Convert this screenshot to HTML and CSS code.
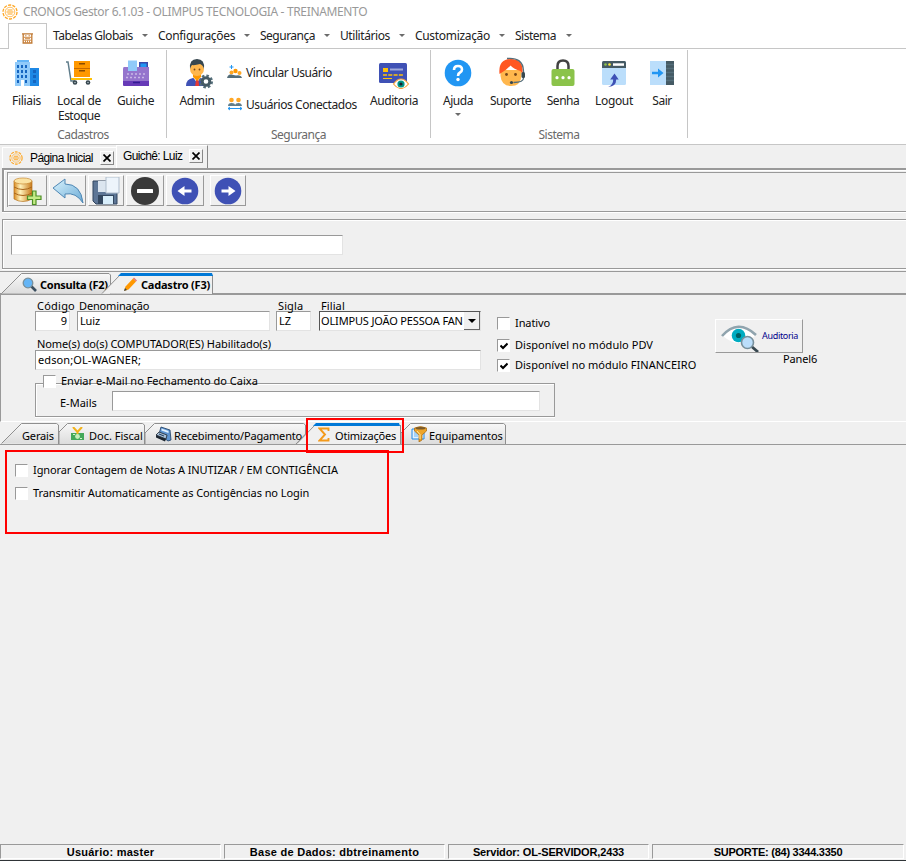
FILE: index.html
```html
<!DOCTYPE html>
<html lang="pt-BR">
<head>
<meta charset="utf-8">
<title>CRONOS Gestor</title>
<link rel="stylesheet" href="styles.css">
</head>
<body>
<svg class="defs" width="0" height="0">
  <defs>
    <linearGradient id="tabGrad" x1="0" y1="0" x2="0" y2="1"><stop offset="0" stop-color="#f8f8f8"/><stop offset="1" stop-color="#dcdcdc"/></linearGradient>
    <linearGradient id="gold" x1="0" y1="0" x2="1" y2="0"><stop offset="0" stop-color="#d98a20"/><stop offset=".35" stop-color="#fff3bd"/><stop offset="1" stop-color="#c87a1c"/></linearGradient>
    <linearGradient id="sky" x1="0" y1="0" x2="1" y2="1"><stop offset="0" stop-color="#d9f3fd"/><stop offset="1" stop-color="#6aaad6"/></linearGradient>
    <symbol id="coin" viewBox="0 0 16 16"><circle cx="8" cy="8" r="7" fill="none" stroke="#ffa51f" stroke-width="1.3" stroke-dasharray="3.2 1.200"/><circle cx="8" cy="8" r="4.800" fill="none" stroke="#ffb84d" stroke-width=".9"/><path d="M5.500 6h5M4.500 8h7M5.500 10h5" stroke="#ffa51f" stroke-width="1.100"/></symbol>
  </defs>
</svg>
<div class="window">
  <header class="titlebar"><svg width="16" height="16"><use href="#coin"/></svg><span class="t k35">CRONOS Gestor 6.1.03 - OLIMPUS TECNOLOGIA - TREINAMENTO</span></header>
  <nav class="menubar">
    <div class="home-tab"><svg width="11" height="11" viewBox="0 0 11 11"><path d="M0 .8h11M.5 10h10M1.200 1v9M9.800 1v9" stroke="#c07a34" stroke-width="1.300"/><path d="M3 2.800h1.500M6.500 2.800H8M3 5.700h5M1 4.300h9M1 7.200h9M3.500 7.500V10M5.500 7.500V10M7.500 7.500V10" stroke="#cf8a45"/></svg></div>
    <div class="menu m1"><span class="t k49">Tabelas Globais</span><i></i></div>
    <div class="menu m2"><span class="t k33">Configurações</span><i></i></div>
    <div class="menu m3"><span class="t k49">Segurança</span><i></i></div>
    <div class="menu m4"><span class="t k43">Utilitários</span><i></i></div>
    <div class="menu m5"><span class="t k33">Customização</span><i></i></div>
    <div class="menu m6"><span class="t k49">Sistema</span><i></i></div>
  </nav>
  <section class="ribbon">
    <div class="group g1">
      <div class="items">
        <div class="big"><svg width="32" height="32" viewBox="0 0 32 32"><path d="M6 3h12v2H6z" fill="#64b5f6"/><path d="M4 5h15v24H4z" fill="#90caf9"/><path d="M19 11h9v18h-9z" fill="#1e88e5"/><path d="M6 8h2v3H6zM10 8h2v3h-2zM14 8h2v3h-2zM6 13h2v3H6zM10 13h2v3h-2zM14 13h2v3h-2zM6 18h2v3H6zM10 18h2v3h-2zM14 18h2v3h-2zM6 23h2v3H6zM14 23h2v3h-2zM22 13h3v3h-3zM22 18h3v3h-3zM22 23h3v3h-3z" fill="#1565c0"/><path d="M10 23h3v6h-3z" fill="#fff"/></svg><span class="t k33">Filiais</span></div>
        <div class="big"><svg width="32" height="32" viewBox="0 0 32 32"><path d="M3 5h2l3 19h4" fill="none" stroke="#607d8b" stroke-width="1.500"/><path d="M11 4h16v16H11z" fill="#ff9800"/><path d="M11 11.500h16" stroke="#c66900"/><path d="M16 6h6v1.500h-6zM16 13h6v1.500h-6z" fill="#8a4b00"/><path d="M8 21h21v2H8z" fill="#ffc107"/><circle cx="12" cy="25.500" r="2.300" fill="#37474f"/><circle cx="25" cy="25.500" r="2.300" fill="#37474f"/><circle cx="12" cy="25.500" r=".8" fill="#b0bec5"/><circle cx="25" cy="25.500" r=".8" fill="#b0bec5"/></svg><div class="two"><span class="t k33">Local de</span><span class="t k49">Estoque</span></div></div>
        <div class="big"><svg width="32" height="32" viewBox="0 0 32 32"><path d="M19 5h9v7h-9z" fill="#3949ab"/><path d="M20.500 6.500h6V10h-6z" fill="#2196f3"/><path d="M4 10h25v15H3V12q0-2 1-2z" fill="#9575cd"/><path d="M8 3.500h9V14H8z" fill="#90caf9"/><path d="M3 24h26v5H4q-1 0-1-1z" fill="#673ab7"/><path d="M7 17h19M6 20.500h20" stroke="#c9b9e6" stroke-width="1.600" stroke-dasharray="2 2"/><path d="M13 25.500h7" stroke="#311b92" stroke-width="1.500"/></svg><span class="t k35">Guiche</span></div>
      </div>
      <div class="caption"><span class="t k49">Cadastros</span></div>
    </div>
    <div class="group g2">
      <div class="items">
        <div class="big"><svg width="32" height="32" viewBox="0 0 32 32"><path d="M5 29q0-7 7-8l4 1 4-1q4 1 5 8z" fill="#3f51b5"/><path d="M12 20h8l-4 6z" fill="#fff"/><path d="M15.200 21h2l1 8h-4z" fill="#e53935"/><path d="M12 16h8v4l-4 4-4-4z" fill="#ff9800"/><circle cx="16" cy="12" r="7" fill="#ffb74d"/><path d="M9 12q-1-10 7-10t7 10q-1-4-4-5-5 1.500-8 1-1 1-2 4z" fill="#37474f"/><circle cx="13.500" cy="12.500" r=".9" fill="#784719"/><circle cx="18.500" cy="12.500" r=".9" fill="#784719"/><circle cx="25" cy="24.500" r="5.800" fill="none" stroke="#546e7a" stroke-width="2.500" stroke-dasharray="2.500 2"/><circle cx="25" cy="24.500" r="3.800" fill="#fff" stroke="#455a64" stroke-width="3"/></svg><span class="t k35">Admin</span></div>
        <div class="small-col">
          <div class="small"><svg width="16" height="16" viewBox="0 0 16 16"><path d="M4.500 1v4M2.500 3h4" stroke="#2196f3"/><circle cx="4.500" cy="8.500" r="2" fill="#ffa726"/><circle cx="8.500" cy="7" r="2.200" fill="#ff9800"/><circle cx="12.500" cy="9" r="2" fill="#ffa726"/><path d="M0 14q1-4 4-3.500l5 1q5-1 6 2.500z" fill="#546e7a"/></svg><span class="t k43">Vincular Usuário</span></div>
          <div class="small"><svg width="16" height="16" viewBox="0 0 16 16"><circle cx="4.500" cy="4" r="2.300" fill="#ffa726"/><circle cx="11.500" cy="4" r="2.300" fill="#ffa726"/><path d="M1 10q0-3 3.500-3T8 9q.5-2 3.500-2T15 10z" fill="#607d8b"/><path d="M1 12.500h14M3 11l-2 1.500L3 14M13 11l2 1.500L13 14" fill="none" stroke="#2196f3"/></svg><span class="t k43">Usuários Conectados</span></div>
        </div>
        <div class="big"><svg width="32" height="32" viewBox="0 0 32 32"><rect x="1" y="6" width="28" height="20" rx="1.500" fill="#3f51b5"/><path d="M5 11h5v4H5z" fill="#ffc107"/><path d="M12 11.500h13v2H12z" fill="#9fa8da"/><path d="M5 18h20" stroke="#ffc107" stroke-width="1.600" stroke-dasharray="4 1.300"/><path d="M5 21.500h9" stroke="#ffc107"/><path d="M15.500 27q3.500-5 7.500-5t7.500 5q-3.500 4.500-7.500 4.500T15.500 27z" fill="#fff" stroke="#f5a33c" stroke-width="1.200"/><circle cx="23" cy="27" r="3.600" fill="#009688"/><circle cx="23" cy="27" r="1.600" fill="#17202a"/></svg><span class="t k43">Auditoria</span></div>
      </div>
      <div class="caption"><span class="t k49">Segurança</span></div>
    </div>
    <div class="group g3">
      <div class="items">
        <div class="big"><svg width="32" height="32" viewBox="0 0 32 32"><circle cx="16" cy="16" r="13.300" fill="#2196f3"/><path d="M12 13q0-4 4-4t4 3.500q0 2-2 3t-2 3.500" fill="none" stroke="#fff" stroke-width="2.600"/><circle cx="16" cy="22.500" r="1.700" fill="#fff"/></svg><span class="t k43">Ajuda</span><i></i></div>
        <div class="big"><svg width="32" height="32" viewBox="0 0 32 32"><path d="M5.500 13h21v6q-1 10-10.500 10T5.500 19z" fill="#ffb74d"/><path d="M4.500 17Q3 2 16 2t11.500 15l-2-3Q19 12 15.500 8.500 12 13 4.500 17z" fill="#ff5722"/><path d="M12 1.500Q28 0 28.500 14v7q0 4.500-10 4.500" fill="none" stroke="#546e7a" stroke-width="1.300"/><rect x="26.500" y="15" width="3.500" height="6" rx="1.500" fill="#37474f"/><circle cx="11.500" cy="17.500" r="1.400" fill="#784719"/><circle cx="20.500" cy="17.500" r="1.400" fill="#784719"/><circle cx="16.500" cy="25.500" r="1.600" fill="#37474f"/></svg><span class="t k49">Suporte</span></div>
        <div class="big"><svg width="32" height="32" viewBox="0 0 32 32"><path d="M10.500 15V9q0-5.500 5.500-5.500T21.500 9v6" fill="none" stroke="#424242" stroke-width="2.500"/><rect x="4.500" y="12" width="23" height="17" rx="2" fill="#8bc34a"/><circle cx="10" cy="20.700" r="1.600" fill="#fff"/><circle cx="16" cy="20.700" r="1.600" fill="#fff"/><circle cx="22" cy="20.700" r="1.600" fill="#fff"/></svg><span class="t k49">Senha</span></div>
        <div class="big"><svg width="32" height="32" viewBox="0 0 32 32"><rect x="4" y="4" width="24" height="24" rx="1.500" fill="#bbdefb"/><path d="M5.500 4h21Q28 4 28 5.500V11H4V5.500Q4 4 5.500 4z" fill="#455a64"/><circle cx="7.500" cy="7.500" r="1.300" fill="#8bc34a"/><circle cx="11.500" cy="7.500" r="1.300" fill="#ffeb3b"/><path d="M15 6.300h11v2.500H15z" fill="#fff"/><path d="M16.500 16.500l4.200 6h-2.500q0 7-8 7.500 5-2 5-7.500h-3z" fill="#3f51b5"/></svg><span class="t k35">Logout</span></div>
        <div class="big"><svg width="32" height="32" viewBox="0 0 32 32"><path d="M4 4h16v24H4z" fill="#bbdefb"/><path d="M20 4h8v24h-8z" fill="#455a64"/><path d="M20 7.500h8M20 11.500h8M20 15.500h8M20 19.500h8M20 23.500h8" stroke="#546e7a" stroke-width="1.500"/><path d="M6 14.700h6v-3.200l5.500 4.500-5.500 4.500v-3.200H6z" fill="#2196f3"/></svg><span class="t k49">Sair</span></div>
      </div>
      <div class="caption"><span class="t k49">Sistema</span></div>
    </div>
  </section>
  <div class="doctabs">
    <div class="doctab first"><svg width="14" height="14"><use href="#coin"/></svg><span class="t k60">Página Inicial</span><button><svg width="8" height="8" viewBox="0 0 8 8"><path d="M.5.500l7 7M7.500.500l-7 7" stroke="#000" stroke-width="1.700"/></svg></button></div>
    <div class="doctab second"><span class="t k60">Guichê: Luiz</span><button><svg width="8" height="8" viewBox="0 0 8 8"><path d="M.5.500l7 7M7.500.500l-7 7" stroke="#000" stroke-width="1.700"/></svg></button></div>
  </div>
  <div class="toolpanel"><div class="toolbar">
    <div class="tool w1"><svg width="30" height="28" viewBox="0 0 30 28"><path d="M1 4v18q9 5 18 0V4z" fill="url(#gold)" stroke="#b8741e" stroke-width=".7"/><ellipse cx="10" cy="4" rx="9" ry="3" fill="#fbe3a3" stroke="#c98a35" stroke-width=".7"/><path d="M1 10q9 5 18 0M1 16q9 5 18 0" fill="none" stroke="#a9651a"/><path d="M19.500 14h3.500v5h5v3.500h-5v5h-3.500v-5h-5V19h5z" fill="#c3ea85" stroke="#4e8f26" stroke-width="1.200"/></svg></div>
    <div class="tool w2"><svg width="32" height="28" viewBox="0 0 32 28"><path d="M1 11L13 2v5q16 0 18 19-7-11-18-9v4z" fill="url(#sky)" stroke="#4f87b4"/></svg></div>
    <div class="tool w3"><svg width="30" height="28" viewBox="0 0 30 28"><path d="M2 4h22l2 2v21H5l-3-3z" fill="#5d7696" stroke="#31445e"/><path d="M7 4h13v11H7z" fill="#dbe5ef"/><path d="M15 0h13v16H15z" fill="#edf4fb" stroke="#afbdcc"/><path d="M7 18h16v9H7z" fill="#33475f"/><path d="M12 19h10v8H12z" fill="#d8eefb"/></svg></div>
    <div class="tool w4"><svg width="30" height="30" viewBox="0 0 30 30"><circle cx="15" cy="15" r="14" fill="#3a3a3a"/><rect x="7" y="13" width="16" height="4" rx=".6" fill="#fff"/></svg></div>
    <div class="tool w5"><svg width="28" height="28" viewBox="0 0 28 28"><circle cx="14" cy="14" r="13.300" fill="#3f51b5"/><path d="M6.500 14l7-5v3.600h7v2.800h-7V19z" fill="#fff"/></svg></div>
    <div class="tool w6"><svg width="28" height="28" viewBox="0 0 28 28"><circle cx="14" cy="14" r="13.300" fill="#3f51b5"/><path d="M21.500 14l-7-5v3.600h-7v2.800h7V19z" fill="#fff"/></svg></div>
  </div></div>
  <div class="searchpanel"><div class="field search"></div></div>
  <div class="tabstrip main-tabs">
    <div class="ptab p1"><svg width="112" height="22" viewBox="0 0 112 22"><path d="M1.500 21.500L21.500 1.500H109l1.500 1.500V22" fill="url(#tabGrad)" stroke="#8f8f8f"/></svg><div class="ptext"><svg width="15" height="15" viewBox="0 0 15 15"><path d="M9 9l5 5" stroke="#3c4f5f" stroke-width="2.600"/><circle cx="6" cy="6" r="4.800" fill="#64b5f6" stroke="#78909c" stroke-width="1.300"/></svg><span class="t k25">Consulta (F2)</span></div></div>
    <div class="ptab p2"><svg width="112" height="22" viewBox="0 0 112 22"><path d="M1 21.500L20.500 1.500H111.500V22" fill="#f0f0f0"/><path d="M1 21.500L20.500 1.500M111.500 3v19" stroke="#8f8f8f"/><path d="M20 1h91l1 3H17z" fill="#0078d7"/></svg><div class="ptext"><svg width="14" height="15" viewBox="0 0 14 15"><path d="M1 14l1.500-4.500L10 1.500l3 3-7.500 8z" fill="#ff9800"/><path d="M1 14l1-3 2 2z" fill="#37474f"/><path d="M10 1.500L11 .5l3 3-1 1z" fill="#e57373"/></svg><span class="t k20">Cadastro (F3)</span></div></div>
  </div>
  <div class="form">
    <div class="form-left">
      <div class="row">
        <div class="fld f1"><label><span class="t x20">Código</span></label><div class="field right"><span class="t">9</span></div></div>
        <div class="fld f2"><label><span class="t k15">Denominação</span></label><div class="field"><span class="t k15">Luiz</span></div></div>
        <div class="fld f3"><label><span class="t x10">Sigla</span></label><div class="field"><span class="t">LZ</span></div></div>
        <div class="fld f4"><label><span class="t x10">Filial</span></label><div class="field combo"><div class="combo-text"><span class="t k15">OLIMPUS JOÃO PESSOA FAN</span></div><div class="combo-btn"><i></i></div></div></div>
      </div>
      <div class="fld f5"><label><span class="t k07">Nome(s) do(s) COMPUTADOR(ES) Habilitado(s)</span></label><div class="field"><span class="t x10">edson;OL-WAGNER;</span></div></div>
      <div class="groupbox">
        <div class="legend"><span class="chk"></span><span class="t">Enviar e-Mail no Fechamento do Caixa</span></div>
        <div class="mail"><span class="t">E-Mails</span><div class="field"></div></div>
      </div>
    </div>
    <div class="form-mid">
      <div class="check"><span class="chk"></span><span class="t k10">Inativo</span></div>
      <div class="check"><span class="chk"><svg width="8" height="8" viewBox="0 0 8 8"><path d="M.5 3.500L3 6l4.500-4.500" fill="none" stroke="#000" stroke-width="2"/></svg></span><span class="t x04">Disponível no módulo PDV</span></div>
      <div class="check"><span class="chk"><svg width="8" height="8" viewBox="0 0 8 8"><path d="M.5 3.500L3 6l4.500-4.500" fill="none" stroke="#000" stroke-width="2"/></svg></span><span class="t">Disponível no módulo FINANCEIRO</span></div>
    </div>
    <div class="form-right">
      <div class="audit"><svg width="40" height="28" viewBox="0 0 40 28"><path d="M3 12q14-17 32 0-16 14-32 0z" fill="#fff"/><path d="M2 12Q18-6 36 11" fill="none" stroke="#90a4ae" stroke-width="2.600"/><circle cx="18.500" cy="11.500" r="6.800" fill="#00acc1"/><circle cx="18.500" cy="11.500" r="2.600" fill="#006064"/><path d="M31 22l7 6" stroke="#37474f" stroke-width="2.800"/><circle cx="27.500" cy="18.500" r="6" fill="#bbdefb" stroke="#78909c" stroke-width="1.600"/></svg><span class="t k33">Auditoria</span></div>
      <div class="panel6"><span class="t k15">Panel6</span></div>
    </div>
  </div>
  <div class="tabstrip sub-tabs">
    <div class="ptab s1"><svg width="59" height="22" viewBox="0 0 59 22"><path d="M1.500 21.500L21.500 1.500H56.500l2 1.500V22" fill="url(#tabGrad)" stroke="#8f8f8f"/></svg><div class="ptext"><span class="t k15">Gerais</span></div></div>
    <div class="ptab s2"><svg width="86" height="22" viewBox="0 0 86 22"><path d="M0 22V10L8.500 1.500H83.500l2 1.500V22" fill="url(#tabGrad)" stroke="#8f8f8f"/></svg><div class="ptext"><svg width="13" height="15" viewBox="0 0 13 15"><path d="M0 6h13v7H0z" fill="#43a85a"/><circle cx="6.500" cy="9.500" r="2.400" fill="#c6efb9"/><path d="M2 7h2v1H2zM9 11h2v1H9z" fill="#d5f5c8"/><path d="M2 0l4.500 5L11 0M6.500 5v2" fill="none" stroke="#f2b21b" stroke-width="2"/></svg><span class="t">Doc. Fiscal</span></div></div>
    <div class="ptab s3"><svg width="161" height="22" viewBox="0 0 161 22"><path d="M0 22V11L9.500 1.500H158.500l2 1.500V12L151 22" fill="url(#tabGrad)" stroke="#8f8f8f"/></svg><div class="ptext"><svg width="17" height="16" viewBox="0 0 17 16"><path d="M6 1l9 3 1 10-3 1L4 8z" fill="#5c93d0" stroke="#1d3b5e" stroke-width=".8"/><path d="M6.500 2.500l7 2.500v2l-7-2.500z" fill="#dff0ff"/><path d="M1 9l3-3 8 3-1 4z" fill="#a8bfd6" stroke="#1c2530" stroke-width=".8"/><path d="M1 9l10 4-1 2.500L1 11.500z" fill="#1c2530"/><path d="M4 8l5 2" stroke="#1d3b5e"/></svg><span class="t k18">Recebimento/Pagamento</span></div></div>
    <div class="ptab s4"><svg width="105" height="22" viewBox="0 0 105 22"><path d="M1 22L20.500 1.500H104V22" fill="#f0f0f0"/><path d="M1 21.500L20.500 1.500M104.500 3v19" stroke="#8f8f8f"/><path d="M20 1h83l1 3H17z" fill="#0078d7"/></svg><div class="ptext"><svg width="12" height="15" viewBox="0 0 12 15"><path d="M10.500 4V1.500H1.500L7 7.500l-5.500 6h9V11" fill="none" stroke="#f39a1b" stroke-width="1.900"/></svg><span class="t k20">Otimizações</span></div></div>
    <div class="ptab s5"><svg width="106" height="22" viewBox="0 0 106 22"><path d="M0 22V11L9.500 1.500H102.500l2 1.500V22" fill="url(#tabGrad)" stroke="#8f8f8f"/></svg><div class="ptext"><svg width="16" height="16" viewBox="0 0 16 16"><path d="M1 3h12v10H1z" fill="#e4f1fc" stroke="#1e88e5"/><path d="M3 6h4M3 8h4M3 10h4" stroke="#64b5f6"/><path d="M3.500 2q6-3 12 0v3l-4.500 4v5l-3 2V9L3.500 5z" fill="#eda52a" stroke="#a5640d" stroke-width=".7"/><ellipse cx="9.500" cy="2.300" rx="5" ry="1.300" fill="#7a5a2a"/><path d="M6 5l3 3.500V13" fill="none" stroke="#ffe9a0"/></svg><span class="t k07">Equipamentos</span></div></div>
  </div>
  <main class="content">
    <div class="check"><span class="chk"></span><span class="t k10">Ignorar Contagem de Notas A INUTIZAR / EM CONTIGÊNCIA</span></div>
    <div class="check"><span class="chk"></span><span class="t k07">Transmitir Automaticamente as Contigências no Login</span></div>
  </main>
  <footer class="status">
    <div class="b1"><span class="t x25">Usuário: master</span></div><div class="b2"><span class="t x25">Base de Dados: dbtreinamento</span></div><div class="b3"><span class="t k15">Servidor: OL-SERVIDOR,2433</span></div><div class="b4"><span class="t k25">SUPORTE: (84) 3344.3350</span></div>
  </footer>
  <div class="mark mark-tab"></div>
  <div class="mark mark-options"></div>
</div>
</body>
</html>
```
FILE: styles.css
```css
* { box-sizing: border-box; }
body { margin: 0; background: #f0f0f0; font-family: "Noto Sans", sans-serif; font-size: 11px; color: #000; }
.defs { display: block; width: 0; height: 0; }
svg { display: block; flex: none; }
.t { white-space: nowrap; display: inline-block; }

/* text tracking */
.k07 { letter-spacing: -.07px; } .k10 { letter-spacing: -.1px; } .k15 { letter-spacing: -.15px; }
.k18 { letter-spacing: -.18px; } .k20 { letter-spacing: -.21px; } .k25 { letter-spacing: -.26px; }
.k33 { letter-spacing: -.32px; } .k35 { letter-spacing: -.35px; } .k43 { letter-spacing: -.43px; }
.k49 { letter-spacing: -.5px; } .k60 { letter-spacing: -.61px; }
.x04 { letter-spacing: .04px; } .x10 { letter-spacing: .1px; } .x20 { letter-spacing: .23px; } .x25 { letter-spacing: .26px; }

.window { position: relative; width: 906px; height: 861px; display: flex; flex-direction: column; overflow: hidden; }
.window > * { flex: none; }

.titlebar { height: 23px; background: #fff; display: flex; align-items: center; padding-left: 2px; gap: 5px; font-size: 12px; color: #999; }
.menubar { height: 26px; background: #fff; border-bottom: 1px solid #c6c6c6; display: flex; padding-left: 8px; font-size: 12px; color: #222; }
.home-tab { width: 39px; height: 26px; background: #fff; border: 1px solid #c6c6c6; border-bottom: 0; display: grid; place-items: center; padding-top: 4px; }
.menu { display: flex; align-items: center; justify-content: space-between; height: 25px; margin-left: 6px; }
.m1 { width: 95px; }
.m2 { width: 92px; margin-left: 10px; }
.m3 { width: 70px; margin-left: 10px; }
.m4 { width: 65px; margin-left: 10px; }
.m5 { width: 90px; margin-left: 10px; }
.m6 { width: 57px; margin-left: 10px; }
.menu i, .big i { width: 0; height: 0; border: 3px solid transparent; border-top-color: #6b6b6b; border-bottom: 0; }

.ribbon { height: 96px; background: #fff; border-bottom: 1px solid #c6c6c6; display: flex; font-size: 12px; line-height: 15px; color: #222; }
.group { height: 88px; margin-top: 1px; border-right: 1px solid #c6c6c6; }
.g1 { width: 167px; }
.g2 { width: 264px; }
.g3 { width: 257px; }
.items { display: grid; height: 77px; padding-top: 7px; }
.g1 .items { grid-template-columns: 53px 52px 61px; }
.g2 .items { grid-template-columns: 60px 131px 72px; }
.g3 .items { grid-template-columns: 54px 51px 54px 48px 48px; }
.big { display: flex; flex-direction: column; align-items: center; text-align: center; }
.big > svg { margin-bottom: 4px; }
.two { display: flex; flex-direction: column; align-items: center; }
.big i { margin-top: 5px; }
.caption { text-align: center; color: #6a6a6a; }
.small { display: flex; align-items: center; gap: 3px; height: 32px; }
.small-col { margin-top: -1px; }

.doctabs { height: 23px; display: flex; font-family: "Liberation Sans", sans-serif; font-size: 12px; }
.doctab { display: flex; align-items: center; }
.doctab button { width: 14px; height: 14px; flex: none; padding: 0; background: #f0f0f0; border: 1px solid #fff; border-right-color: #888; border-bottom-color: #888; display: grid; place-items: center; }
.first { width: 114px; margin: 2px 0 0 2px; padding-left: 6px; gap: 7px; border-top: 1px solid #fff; border-left: 1px solid #fff; }
.second { width: 92px; padding: 0 3px 2px 6px; gap: 7px; border: 1px solid #fff; border-right: 1px solid #888; border-bottom: 0; }

.toolpanel { height: 44px; margin-left: 2px; border: 2px solid #999; border-right: 0; border-bottom-width: 1px; padding: 2px 0 0 3px; box-shadow: inset 1px 1px #fff, 0 1px #fff; }
.toolbar { height: 35px; border-top: 1px solid #999; border-left: 1px solid #999; display: flex; padding-top: 2px; }
.tool { height: 31px; border: 1px solid #fff; border-right-color: #999; border-bottom-color: #999; display: grid; place-items: center; }
.w1 { width: 39px; }
.w2 { width: 37px; margin-left: 2px; }
.w3 { width: 36px; margin-left: 2px; }
.w4 { width: 38px; margin-left: 2px; }
.w5 { width: 38px; margin-left: 2px; }
.w6 { width: 36px; margin-left: 6px; }
.searchpanel { height: 50px; margin: 7px 0 0 2px; border: 1px solid #999; border-right: 0; padding: 15px 0 0 8px; box-shadow: inset 1px 1px #fff, 0 1px #fff; }
.field { height: 20px; background: #fff; border-top: 1px solid #999; border-left: 1px solid #999; border-right: 1px solid #e3e3e3; border-bottom: 1px solid #e3e3e3; padding-left: 2px; line-height: 18px; overflow: hidden; }
.search { width: 332px; }

.tabstrip { display: flex; height: 22px; }
.main-tabs { margin-top: 2px; height: 24px; border-top: 1px solid #999; border-bottom: 2px solid #999; }
.ptab { display: grid; height: 22px; flex: none; }
.ptab > * { grid-area: 1 / 1; }
.ptext { display: flex; align-items: center; font-weight: bold; padding-top: 2px; }
.p1 .ptext { padding-left: 22px; gap: 3px; }
.p2 { margin-left: -11px; width: 112px; }
.p2 .ptext { padding-left: 22px; gap: 4px; }

.form { height: 127px; border-left: 1px solid #999; display: flex; border-bottom: 1px solid #fff; }
.form-left { width: 520px; margin-left: 34px; padding-top: 5px; }
.row { display: flex; }
.fld label { display: block; height: 11px; line-height: 12px; padding-left: 2px; }
.f1 { width: 35px; }
.f2 { width: 193px; margin-left: 7px; }
.f3 { width: 35px; margin-left: 6px; }
.f4 { width: 162px; margin-left: 8px; }
.right { text-align: right; padding-right: 2px; }
.f5 { width: 446px; margin-top: 7px; }
.f5 label { height: 12px; }
.combo { border-top-color: #555; border-left-color: #555; display: flex; line-height: 17px; padding-left: 1px; }
.combo-text { flex: 1; overflow: hidden; }
.combo-btn { width: 16px; margin-left: 1px; background: #f0f0f0; border-right: 1px solid #666; border-bottom: 1px solid #666; display: grid; place-items: center; }
.combo-btn i { border: 4px solid transparent; border-top-color: #000; border-bottom: 0; }
.groupbox { width: 520px; height: 34px; margin-top: 13px; border: 1px solid #999; box-shadow: inset 1px 1px #fff, 0 1px #fff; }
.legend { display: flex; align-items: center; gap: 5px; height: 14px; line-height: 13px; margin: -10px 0 0 7px; }
.legend .t { margin-top: -2px; }
.mail { display: flex; align-items: center; padding-left: 24px; margin-top: 3px; }
.mail .t { padding-top: 2px; }
.mail .field { margin-left: 15px; width: 428px; }
.chk { width: 13px; height: 13px; flex: none; background: #fff; border: 1px solid #fff; border-top-color: #999; border-left-color: #999; display: grid; place-items: center; }
.check { display: flex; align-items: center; gap: 5px; height: 13px; line-height: 13px; }
.check .t { margin-top: -2px; }
.form-mid { width: 218px; margin-left: -58px; padding-top: 22px; }
.form-mid .check { margin-bottom: 7px; }
.form-mid .check:first-child { margin-bottom: 9px; }
.form-right { padding-top: 24px; }
.audit { width: 88px; height: 34px; border: 1px solid #fff; border-right-color: #999; border-bottom-color: #999; display: flex; align-items: center; padding-left: 4px; gap: 2px; font-size: 9px; color: #00008b; }
.audit svg { margin-top: 4px; }
.audit .t { margin-top: -2px; }
.panel6 { padding-left: 68px; line-height: 12px; }

.sub-tabs { height: 23px; border-bottom: 1px solid #999; }
.sub-tabs .ptext { font-weight: normal; gap: 5px; }
.sub-tabs .ptext .t { padding-top: 2px; }
.s1 .ptext { padding-left: 22px; }
.s2 .ptext { padding-left: 12px; }
.s3 .ptext { padding-left: 10px; gap: 2px; }
.s4 { margin-left: -10px; }
.s4 .ptext { padding-left: 22px; }
.s5 .ptext { padding-left: 10px; gap: 2px; }
.content { flex: 1; padding: 19px 0 0 15px; min-height: 0; overflow: hidden; }
.content .check { margin-bottom: 10px; }

.status { height: 17px; display: flex; gap: 3px; border-bottom: 1px solid #2f3437; font-family: "Liberation Sans", sans-serif; font-weight: bold; }
.status div { height: 15px; border: 1px solid #fff; border-top-color: #999; border-left-color: #999; text-align: center; line-height: 15px; }
.b1, .b2 { width: 221px; }
.b3 { width: 201px; }
.b4 { width: 252px; }

.mark { position: absolute; border: 2px solid #f00; }
.mark-tab { left: 306px; top: 418px; width: 98px; height: 35px; }
.mark-options { left: 5px; top: 450px; width: 384px; height: 84px; }
```
